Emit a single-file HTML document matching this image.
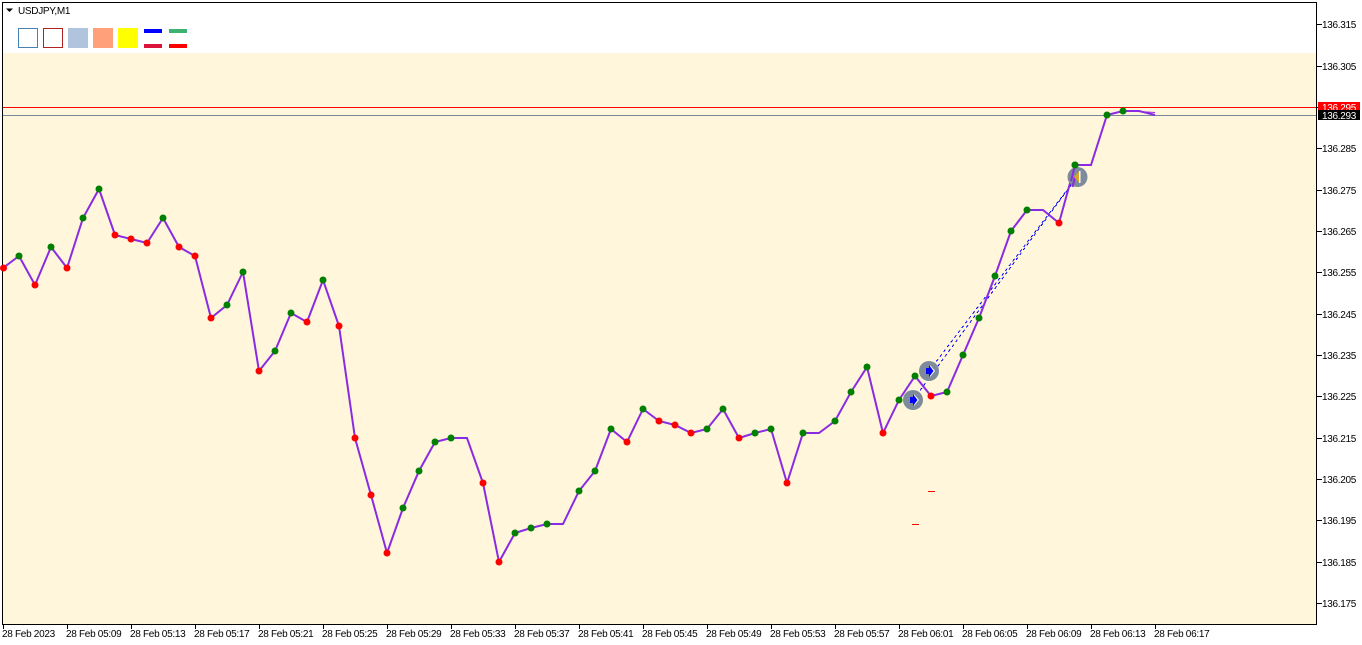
<!DOCTYPE html>
<html><head><meta charset="utf-8"><style>
html,body{margin:0;padding:0;background:#fff;width:1362px;height:645px;overflow:hidden}
svg{display:block;position:absolute;left:0;top:0}
text{font-family:"Liberation Sans",sans-serif;font-size:10px;letter-spacing:-.3px;fill:#000}
.w{fill:#fff}
</style></head><body>
<svg width="1362" height="645" viewBox="0 0 1362 645" xmlns="http://www.w3.org/2000/svg">
<rect x="3" y="53" width="1313" height="571" fill="#FFF6DC"/>
<g shape-rendering="crispEdges">
<rect x="2" y="2" width="1315" height="1" fill="#000"/>
<rect x="2" y="2" width="1" height="623" fill="#000"/>
<rect x="1316" y="2" width="1" height="623" fill="#000"/>
<rect x="2" y="624" width="1315" height="1" fill="#000"/>
<path d="M1317 24.5h5M1317 66.5h5M1317 107.5h5M1317 148.5h5M1317 190.5h5M1317 231.5h5M1317 272.5h5M1317 314.5h5M1317 355.5h5M1317 396.5h5M1317 438.5h5M1317 479.5h5M1317 520.5h5M1317 562.5h5M1317 603.5h5" stroke="#000" fill="none"/>
<path d="M3.500 625v4M67.500 625v4M131.500 625v4M195.500 625v4M259.500 625v4M323.500 625v4M387.500 625v4M451.500 625v4M515.500 625v4M579.500 625v4M643.500 625v4M707.500 625v4M771.500 625v4M835.500 625v4M899.500 625v4M963.500 625v4M1027.500 625v4M1091.500 625v4M1155.500 625v4" stroke="#000" fill="none"/>
<rect x="3" y="107" width="1313" height="1" fill="#f00"/>
<rect x="3" y="115" width="1313" height="1" fill="#778899"/>
<rect x="928" y="491" width="7" height="1" fill="#f00"/>
<rect x="912" y="524" width="7" height="1" fill="#f00"/>
<rect x="1318" y="102" width="42" height="8" fill="#f00"/>
<rect x="18.500" y="28.500" width="19" height="19" fill="#fff" stroke="#4682B4"/>
<rect x="43.500" y="28.500" width="19" height="19" fill="#fff" stroke="#B22222"/>
<rect x="68" y="28" width="20" height="20" fill="#B0C4DE"/>
<rect x="93" y="28" width="20" height="20" fill="#FFA07A"/>
<rect x="118" y="28" width="20" height="20" fill="#FFFF00"/>
<rect x="144" y="29" width="18" height="4" fill="#0000FF"/>
<rect x="144" y="44" width="18" height="4" fill="#DC143C"/>
<rect x="169" y="29" width="18" height="4" fill="#3CB371"/>
<rect x="169" y="44" width="18" height="4" fill="#FF0000"/>
<path d="M913 400L1077 177M929 371L1077 177" stroke="#0000FF" stroke-width="1" stroke-dasharray="3 3" fill="none"/>
</g>
<path d="M6 8.500h7l-3.500 3.500z" fill="#000"/>
<text x="18" y="14">USDJPY,M1</text>
<polyline fill="none" stroke="#8A2BE2" stroke-width="2" stroke-linejoin="miter" points="3,268 19,256 35,285 51,247 67,268 83,218 99,189 115,235 131,239 147,243 163,218 179,247 195,256 211,318 227,305 243,272 259,371 275,351 291,313 307,322 323,280 339,326 355,438 371,495 387,553 403,508 419,471 435,442 451,438 467,438 483,483 499,562 515,533 531,528 547,524 563,524 579,491 595,471 611,429 627,442 643,409 659,421 675,425 691,433 707,429 723,409 739,438 755,433 771,429 787,483 803,433 819,433 835,421 851,392 867,367 883,433 899,400 915,376 931,396 947,392 963,355 979,318 995,276 1011,231 1027,210 1043,210 1059,223 1075,165 1091,165 1107,115 1123,111 1139,111 1155,115"/>
<path d="M1139 111.500L1155 112.500" stroke="#8A2BE2" stroke-width="1" fill="none"/>
<g fill="#f00">
<circle cx="3.500" cy="268" r="3.500"/><circle cx="35" cy="285" r="3.500"/><circle cx="67" cy="268" r="3.500"/><circle cx="115" cy="235" r="3.500"/><circle cx="131" cy="239" r="3.500"/><circle cx="147" cy="243" r="3.500"/><circle cx="179" cy="247" r="3.500"/><circle cx="195" cy="256" r="3.500"/><circle cx="211" cy="318" r="3.500"/><circle cx="259" cy="371" r="3.500"/><circle cx="307" cy="322" r="3.500"/><circle cx="339" cy="326" r="3.500"/><circle cx="355" cy="438" r="3.500"/><circle cx="371" cy="495" r="3.500"/><circle cx="387" cy="553" r="3.500"/><circle cx="483" cy="483" r="3.500"/><circle cx="499" cy="562" r="3.500"/><circle cx="627" cy="442" r="3.500"/><circle cx="659" cy="421" r="3.500"/><circle cx="675" cy="425" r="3.500"/><circle cx="691" cy="433" r="3.500"/><circle cx="739" cy="438" r="3.500"/><circle cx="787" cy="483" r="3.500"/><circle cx="883" cy="433" r="3.500"/><circle cx="931" cy="396" r="3.500"/><circle cx="1059" cy="223" r="3.500"/>
</g>
<g fill="#008000">
<circle cx="19" cy="256" r="3.500"/><circle cx="51" cy="247" r="3.500"/><circle cx="83" cy="218" r="3.500"/><circle cx="99" cy="189" r="3.500"/><circle cx="163" cy="218" r="3.500"/><circle cx="227" cy="305" r="3.500"/><circle cx="243" cy="272" r="3.500"/><circle cx="275" cy="351" r="3.500"/><circle cx="291" cy="313" r="3.500"/><circle cx="323" cy="280" r="3.500"/><circle cx="403" cy="508" r="3.500"/><circle cx="419" cy="471" r="3.500"/><circle cx="435" cy="442" r="3.500"/><circle cx="451" cy="438" r="3.500"/><circle cx="515" cy="533" r="3.500"/><circle cx="531" cy="528" r="3.500"/><circle cx="547" cy="524" r="3.500"/><circle cx="579" cy="491" r="3.500"/><circle cx="595" cy="471" r="3.500"/><circle cx="611" cy="429" r="3.500"/><circle cx="643" cy="409" r="3.500"/><circle cx="707" cy="429" r="3.500"/><circle cx="723" cy="409" r="3.500"/><circle cx="755" cy="433" r="3.500"/><circle cx="771" cy="429" r="3.500"/><circle cx="803" cy="433" r="3.500"/><circle cx="835" cy="421" r="3.500"/><circle cx="851" cy="392" r="3.500"/><circle cx="867" cy="367" r="3.500"/><circle cx="899" cy="400" r="3.500"/><circle cx="915" cy="376" r="3.500"/><circle cx="947" cy="392" r="3.500"/><circle cx="963" cy="355" r="3.500"/><circle cx="979" cy="318" r="3.500"/><circle cx="995" cy="276" r="3.500"/><circle cx="1011" cy="231" r="3.500"/><circle cx="1027" cy="210" r="3.500"/><circle cx="1075" cy="165" r="3.500"/><circle cx="1107" cy="115" r="3.500"/><circle cx="1123" cy="111" r="3.500"/>
</g>
<g>
<circle cx="913" cy="400" r="10" fill="#7D8B9B"/>
<path d="M911 397h3v-3l5 6-5 6v-3h-3z" fill="#fff"/>
<path d="M910 397h3v-3l4.500 6-4.500 6v-3h-3z" fill="#0000FF"/>
<circle cx="929" cy="371" r="10" fill="#7D8B9B"/>
<path d="M927 368h3v-3l5 6-5 6v-3h-3z" fill="#fff"/>
<path d="M926 368h3v-3l4.500 6-4.500 6v-3h-3z" fill="#0000FF"/>
<circle cx="1077.500" cy="177" r="10" fill="#7D8B9B"/>
<path d="M1075 177L1072.500 187" stroke="#8A2BE2" stroke-width="2" fill="none"/>
<path d="M1079 171.500v11l-5-5.500z" fill="#DAA520"/>
<rect x="1079" y="171" width="1.500" height="12" fill="#fff"/>
<path d="M1075 165L1071 181" stroke="#8A2BE2" stroke-width="2" fill="none"/>
<circle cx="1075" cy="165" r="3.500" fill="#008000"/>
</g>
<text class="w" x="1322" y="111">136.295</text>
<rect x="1318" y="110" width="42" height="10" fill="#000" shape-rendering="crispEdges"/>
<text class="w" x="1322" y="119">136.293</text>
<text x="1322" y="28">136.315</text>
<text x="1322" y="70">136.305</text>
<text x="1322" y="152">136.285</text>
<text x="1322" y="194">136.275</text>
<text x="1322" y="235">136.265</text>
<text x="1322" y="276">136.255</text>
<text x="1322" y="318">136.245</text>
<text x="1322" y="359">136.235</text>
<text x="1322" y="400">136.225</text>
<text x="1322" y="442">136.215</text>
<text x="1322" y="483">136.205</text>
<text x="1322" y="524">136.195</text>
<text x="1322" y="566">136.185</text>
<text x="1322" y="607">136.175</text>
<text x="2" y="637">28 Feb 2023</text>
<text x="66" y="637">28 Feb 05:09</text>
<text x="130" y="637">28 Feb 05:13</text>
<text x="194" y="637">28 Feb 05:17</text>
<text x="258" y="637">28 Feb 05:21</text>
<text x="322" y="637">28 Feb 05:25</text>
<text x="386" y="637">28 Feb 05:29</text>
<text x="450" y="637">28 Feb 05:33</text>
<text x="514" y="637">28 Feb 05:37</text>
<text x="578" y="637">28 Feb 05:41</text>
<text x="642" y="637">28 Feb 05:45</text>
<text x="706" y="637">28 Feb 05:49</text>
<text x="770" y="637">28 Feb 05:53</text>
<text x="834" y="637">28 Feb 05:57</text>
<text x="898" y="637">28 Feb 06:01</text>
<text x="962" y="637">28 Feb 06:05</text>
<text x="1026" y="637">28 Feb 06:09</text>
<text x="1090" y="637">28 Feb 06:13</text>
<text x="1154" y="637">28 Feb 06:17</text>
</svg>
</body></html>
